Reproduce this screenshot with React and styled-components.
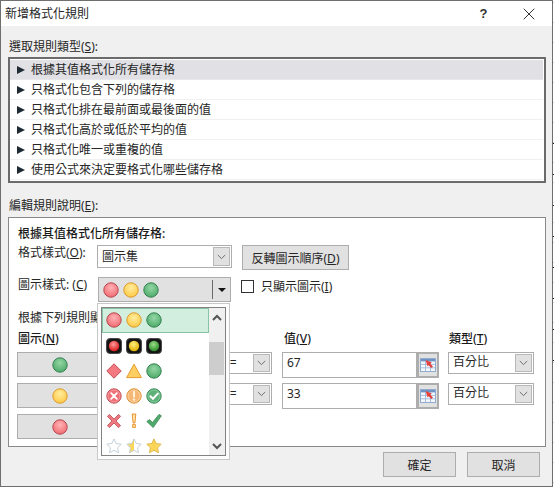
import React, { useId } from "react";
import styled, { createGlobalStyle } from "styled-components";

const Global = createGlobalStyle`
  html, body { margin: 0; padding: 0; }
  body {
    font-family: "Noto Sans", "Noto Sans CJK TC", sans-serif; font-size: 12px; color: #262626;
    background-color: #fff;
    background-image:
      repeating-linear-gradient(#111 0 1px, transparent 1px 31px),
      repeating-linear-gradient(#d0d0d0 0 1px, #fff 1px 20px);
    background-size: 100% 225px, 100% 100%;
    background-position: 0 143px, 0 2px;
    background-repeat: no-repeat;
    min-height: 487px;
  }
  * { box-sizing: border-box; }
`;

const Dialog = styled.div`
  width: 553px; height: 487px; display: flex; flex-direction: column;
  background: #f0f0f0; border: 1px solid #6f6f6f; overflow: hidden;
`;
const TitleBar = styled.div`
  height: 25px; flex: none; display: flex; align-items: center; background: #fff; padding: 0 1px 0 4px;
`;
const TitleText = styled.span`flex: 1; line-height: 25px;`;
const TitleBtn = styled.button`
  width: 45px; height: 25px; border: 0; background: none; padding: 0; display: flex; align-items: center; justify-content: center;
  font: 700 13px "Liberation Sans", sans-serif; color: #333;
`;
const Body = styled.div`flex: 1; padding: 10px 6px 0 7px; display: flex; flex-direction: column; min-height: 0;`;
const SectionLabel = styled.div`
  height: 20px; line-height: 22px; padding-left: 1px; margin-bottom: ${p => p.$gap}px;
`;
const RuleList = styled.div`
  width: 538px; height: 126px; border: 2px solid #6b6b6b; background: #fff; padding: 1px 1px 1px 0; margin-bottom: 12px;
`;
const RuleRow = styled.div`
  height: 20px; display: flex; align-items: center; padding: 1px 0 0 7px; gap: 6px; line-height: 18px;
  background: ${p => (p.$selected ? "#e0e0e5" : "#fff")};
  border-bottom: 1px solid ${p => (p.$selected ? "#e8e8ec" : "#f0f0f0")};
`;
const Tri = styled.span`
  width: 0; height: 0; border-left: 8px solid #1f2a33; border-top: 4px solid transparent; border-bottom: 4px solid transparent;
`;
const Panel = styled.div`
  position: relative; width: 538px; height: 230px; background: #fff; border: 1px solid #8a8a8a; padding: 5px 9px 0 9px;
  display: flex; flex-direction: column;
`;
const Heading = styled.div`height: 20px; line-height: 22px; font-weight: 500; color: #1a1a1a;`;
const Note = styled.div`height: 20px; line-height: 22px; margin-top: 5px;`;
const FormRow = styled.div`
  display: flex; align-items: flex-start; height: ${p => p.$h}px; margin-top: ${p => p.$mt}px;
`;
const FieldLabel = styled.div`
  width: ${p => p.$w}px; flex: none; line-height: 18px; margin-top: ${p => p.$mt}px;
`;
const SelectBox = styled.div`
  width: ${p => p.$w}px; height: ${p => p.$h || 23}px; flex: none; display: flex; align-items: center; justify-content: space-between;
  background: #fff; border: 1px solid #adadad; padding: 1px; padding-left: ${p => p.$pl || 4}px; margin-left: ${p => p.$ml || 0}px;
`;
const SelectText = styled.span`line-height: 18px; margin-bottom: ${p => p.$mb || 0}px;`;
const ArrowBox = styled.span`
  width: 17px; align-self: stretch; flex: none; background: #e1e1e1; border: 1px solid #b8b8b8; display: flex; align-items: center; justify-content: center;
`;
const PushButton = styled.button`
  width: ${p => p.$w}px; height: 25px; flex: none; background: #e1e1e1; border: 1px solid #adadad; padding: 0;
  font: inherit; color: inherit; margin-left: ${p => p.$ml || 0}px; text-align: center;
`;
const IconSelect = styled.div`
  width: 133px; height: 25px; flex: none; margin-left: 1px; background: #e1e1e1; border: 1px solid #adadad;
  display: flex; align-items: center; padding-left: 4px; position: relative;
`;
const IconTrio = styled.span`display: flex; gap: 4px; align-items: center;`;
const DropPart = styled.span`
  position: absolute; right: 0; top: 2px; bottom: 2px; width: 18px; border-left: 1px solid #6a6a6a; display: flex; align-items: center; justify-content: center;
`;
const DownTri = styled.span`
  width: 0; height: 0; border-top: 4px solid #111; border-left: 4px solid transparent; border-right: 4px solid transparent;
`;
const CheckBox = styled.span`
  width: 13px; height: 13px; flex: none; border: 1px solid #333; background: #fff; margin: 3px 7px 0 10px;
`;
const ColHead = styled.div`
  width: ${p => p.$w}px; flex: none; line-height: 18px; font-weight: 500; color: #1a1a1a;
`;
const RuleGrid = styled.div`
  display: flex; flex-direction: column; gap: 6px; margin-top: 4px; margin-left: -1px;
`;
const RuleLine = styled.div`display: flex; align-items: flex-start; height: 25px;`;
const IconButton = styled.button`
  width: 86px; height: 25px; flex: none; background: #e1e1e1; border: 1px solid #adadad; padding: 0;
  display: flex; align-items: center; justify-content: center;
`;
const ValueField = styled.div`
  width: 135px; height: 26px; flex: none; margin-left: 10px; background: #fff; border: 1px solid #adadad;
  display: flex; align-items: center; padding: 0 0 6px 4px;
`;
const PickerBtn = styled.button`
  width: 22px; height: 26px; flex: none; background: #e1e1e1; border: 2px solid #adadad; padding: 0;
  display: flex; align-items: center; justify-content: center;
`;
const Footer = styled.div`
  display: flex; justify-content: flex-end; gap: 11px; padding-right: 6px; margin-top: 5px;
`;
const Popup = styled.div`
  position: absolute; left: 88px; top: 85px; width: 133px; height: 157px; background: #fdfdfd; border: 1px solid #c8c8c8; padding: 3px;
`;
const PopupInner = styled.div`
  width: 125px; height: 149px; border: 1px solid #828282; background: #fff; display: flex; overflow: hidden;
`;
const PopupRows = styled.div`width: 107px; flex: none; overflow: hidden;`;
const PopupRow = styled.div`
  height: 25px; display: flex; align-items: center; padding: 0 0 ${p => (p.$selected ? 2 : 0)}px 4px;
  background: ${p => (p.$selected ? "#d2eedf" : "#fff")};
  outline: ${p => (p.$selected ? "1px solid #86c4a3" : "none")}; outline-offset: -1px;
`;
const ScrollTrack = styled.div`
  flex: 1; background: #f0f0f0; display: flex; flex-direction: column; justify-content: space-between; position: relative; padding: 6px 0 5px;
`;
const ScrollThumb = styled.div`
  position: absolute; left: 0; right: 1px; top: 34px; height: 33px; background: #cdcdcd;
`;
const Chevron = styled.svg`display: block; align-self: center;`;
const GlyphSvg = styled.svg`display: block;`;

const Mn = ({ c }) => <u>{c}</u>;

const SmallChevron = () => (
  <svg width="9" height="6" viewBox="0 0 9 6"><path d="M0.8 1l3.7 3.6L8.2 1" fill="none" stroke="#6f6f6f" strokeWidth="1" /></svg>
);

const palette = {
  red: ["#ffb3b6", "#f0656d", "#b5484f"],
  yellow: ["#ffec9e", "#fdc63e", "#dc9a2c"],
  green: ["#93d6a4", "#4aa766", "#35804f"],
};

const Glyph = ({ children }) => (
  <GlyphSvg width="16" height="16" viewBox="0 0 16 16">{children}</GlyphSvg>
);

const Ball = ({ color }) => {
  const id = useId();
  const [a, b, s] = palette[color];
  return (
    <Glyph>
      <defs>
        <radialGradient id={id} cx="50%" cy="35%" r="70%"><stop offset="0" stopColor={a} /><stop offset="1" stopColor={b} /></radialGradient>
      </defs>
      <circle cx="8" cy="8" r="7.2" fill={`url(#${id})`} stroke={s} strokeWidth="1" />
    </Glyph>
  );
};

const Lamp = ({ color }) => {
  const id = useId();
  const cols = { red: ["#ff9a9a", "#d81818"], yellow: ["#fff080", "#e0ae00"], green: ["#9ade88", "#2a8a28"] }[color];
  return (
    <Glyph>
      <defs>
        <radialGradient id={id} cx="45%" cy="35%" r="65%"><stop offset="0" stopColor={cols[0]} /><stop offset="1" stopColor={cols[1]} /></radialGradient>
      </defs>
      <rect x="0.5" y="0.5" width="15" height="15" rx="3.5" fill="#141414" stroke="#4a4a4a" />
      <circle cx="8" cy="8" r="5.2" fill={`url(#${id})`} />
    </Glyph>
  );
};

const Diamond = () => (
  <Glyph><path d="M8 .8L15.2 8 8 15.2.8 8z" fill="#f4787f" stroke="#bf4f56" /></Glyph>
);
const Triangle = () => (
  <Glyph><path d="M8 1.2L15.4 14.6H.6z" fill="#fdcf62" stroke="#e59a2c" /></Glyph>
);
const XBall = () => (
  <Glyph>
    <circle cx="8" cy="8" r="7.2" fill="#ee6f76" stroke="#bf555a" />
    <circle cx="8" cy="8" r="6" fill="none" stroke="#f7a2a6" strokeWidth=".8" />
    <path d="M5.2 5.2l5.6 5.6M10.8 5.2l-5.6 5.6" stroke="#fff" strokeWidth="1.9" strokeLinecap="round" />
  </Glyph>
);
const BangBall = () => (
  <Glyph>
    <circle cx="8" cy="8" r="7.2" fill="#f7b772" stroke="#dd8f38" />
    <circle cx="8" cy="8" r="6" fill="none" stroke="#fbd6a8" strokeWidth=".8" />
    <path d="M8 3.8v5" stroke="#fff2dc" strokeWidth="2" strokeLinecap="round" />
    <circle cx="8" cy="11.6" r="1.2" fill="#fff2dc" />
  </Glyph>
);
const CheckBall = () => (
  <Glyph>
    <circle cx="8" cy="8" r="7.2" fill="#5cb078" stroke="#3b8a57" />
    <circle cx="8" cy="8" r="6" fill="none" stroke="#8fd0a4" strokeWidth=".8" />
    <path d="M4.4 8.2l2.6 2.6 4.8-5.2" fill="none" stroke="#fff" strokeWidth="2" strokeLinecap="round" />
  </Glyph>
);
const Cross = () => (
  <Glyph><path d="M1.4 3.4L3.4 1.4 8 6l4.6-4.6 2 2L10 8l4.6 4.6-2 2L8 10l-4.6 4.6-2-2L6 8z" fill="#ee7a80" stroke="#b8474e" strokeWidth=".8" /></Glyph>
);
const Bang = () => (
  <Glyph>
    <path d="M6.2 1h3.6L8.9 10H7.1z" fill="#ffe6ae" stroke="#e8871c" strokeWidth=".9" />
    <rect x="6.7" y="11.6" width="2.6" height="2.8" fill="#ffdf9c" stroke="#e8871c" strokeWidth=".8" />
  </Glyph>
);
const Tick = () => (
  <Glyph><path d="M.8 8.6l2.8-2 2.8 3L13 1.4l2.4 1.4-8.2 11.8z" fill="#4fab6b" stroke="#2f7a49" strokeWidth=".7" /></Glyph>
);
const starPath = "M8 .9l2.2 4.6 5 .7-3.6 3.5.9 5L8 12.3l-4.5 2.4.9-5L.8 6.2l5-.7z";
const Star = ({ fill }) => {
  const id = useId();
  const gold = fill !== "none";
  const right = fill === "full";
  return (
    <Glyph>
      <defs>
        <linearGradient id={id} x1="0" x2="1" y1="0" y2="0">
          <stop offset="0" stopColor={gold ? "#fde27a" : "#fff"} />
          <stop offset=".5" stopColor={gold ? "#fbd24f" : "#fff"} />
          <stop offset=".5" stopColor={right ? "#fbd24f" : "#fff"} />
          <stop offset="1" stopColor={right ? "#fde27a" : "#fff"} />
        </linearGradient>
      </defs>
      <path d={starPath} fill={`url(#${id})`} stroke={right ? "#dcb140" : "#bccbd6"} strokeWidth=".9" />
    </Glyph>
  );
};

const Picker = () => (
  <svg width="16" height="16" viewBox="0 0 16 16">
    <rect x="0.5" y="1.5" width="15" height="13" fill="#f4f8fd" stroke="#8fabd0" />
    <rect x="1" y="2" width="14" height="2.4" fill="#6f94c4" />
    <path d="M1 7.4h14M1 10.8h14M5.5 4v10M10.5 4v10" stroke="#9db8da" strokeWidth=".9" />
    <path d="M5.6 3l6.2 2.6-1.5 1.2 2.7 2.8-1.7 1.5-2.7-2.8L7.6 9.6z" fill="#e6403c" />
  </svg>
);

const rules = [
  "根據其值格式化所有儲存格",
  "只格式化包含下列的儲存格",
  "只格式化排在最前面或最後面的值",
  "只格式化高於或低於平均的值",
  "只格式化唯一或重複的值",
  "使用公式來決定要格式化哪些儲存格",
];

const gapped = (a, b, c) => <IconTrio>{a}{b}{c}</IconTrio>;

const iconSets = [
  gapped(<Ball color="red" />, <Ball color="yellow" />, <Ball color="green" />),
  gapped(<Lamp color="red" />, <Lamp color="yellow" />, <Lamp color="green" />),
  gapped(<Diamond />, <Triangle />, <Ball color="green" />),
  gapped(<XBall />, <BangBall />, <CheckBall />),
  gapped(<Cross />, <Bang />, <Tick />),
  gapped(<Star fill="none" />, <Star fill="half" />, <Star fill="full" />),
];

const thresholds = [
  { color: "green", value: "67" },
  { color: "yellow", value: "33" },
];

export default function App() {
  return (
    <>
      <Global />
      <Dialog>
        <TitleBar>
          <TitleText>新增格式化規則</TitleText>
          <TitleBtn>?</TitleBtn>
          <TitleBtn>
            <svg width="12" height="12" viewBox="0 0 12 12"><path d="M.7.7l10.6 10.6M11.3.7L.7 11.3" stroke="#333" strokeWidth="1" fill="none" /></svg>
          </TitleBtn>
        </TitleBar>
        <Body>
          <SectionLabel $gap={1}>選取規則類型(<Mn c="S" />):</SectionLabel>
          <RuleList>
            {rules.map((r, i) => (
              <RuleRow key={r} $selected={i === 0}><Tri />{r}</RuleRow>
            ))}
          </RuleList>
          <SectionLabel $gap={2}>編輯規則說明(<Mn c="E" />):</SectionLabel>
          <Panel>
            <Heading>根據其值格式化所有儲存格:</Heading>
            <FormRow $h={25} $mt={2}>
              <FieldLabel $w={79} $mt={-1}>格式樣式(<Mn c="O" />):</FieldLabel>
              <SelectBox $w={135}><SelectText>圖示集</SelectText><ArrowBox><SmallChevron /></ArrowBox></SelectBox>
              <PushButton $w={107} $ml={10}>反轉圖示順序(<Mn c="D" />)</PushButton>
            </FormRow>
            <FormRow $h={25} $mt={7}>
              <FieldLabel $w={79} $mt={-1}>圖示樣式: (<Mn c="C" />)</FieldLabel>
              <IconSelect>
                {iconSets[0]}
                <DropPart><DownTri /></DropPart>
              </IconSelect>
              <CheckBox />
              <FieldLabel $w={80} $mt={1}>只顯示圖示(<Mn c="I" />)</FieldLabel>
            </FormRow>
            <Note>根據下列規則顯示各個圖示:</Note>
            <FormRow $h={18} $mt={3}>
              <ColHead $w={266}>圖示(<Mn c="N" />)</ColHead>
              <ColHead $w={165}>值(<Mn c="V" />)</ColHead>
              <ColHead $w={60}>類型(<Mn c="T" />)</ColHead>
            </FormRow>
            <RuleGrid>
              {thresholds.map(t => (
                <RuleLine key={t.value}>
                  <IconButton><Ball color={t.color} /></IconButton>
                  <SelectBox $w={52} $h={22} $ml={117} $pl={2}><SelectText>&gt;=</SelectText><ArrowBox><SmallChevron /></ArrowBox></SelectBox>
                  <ValueField>{t.value}</ValueField>
                  <PickerBtn><Picker /></PickerBtn>
                  <SelectBox $w={86} $h={22} $ml={9}><SelectText $mb={2}>百分比</SelectText><ArrowBox><SmallChevron /></ArrowBox></SelectBox>
                </RuleLine>
              ))}
              <RuleLine>
                <IconButton><Ball color="red" /></IconButton>
              </RuleLine>
            </RuleGrid>
            <Popup>
              <PopupInner>
                <PopupRows>
                  {iconSets.map((s, i) => (
                    <PopupRow key={i} $selected={i === 0}>{s}</PopupRow>
                  ))}
                </PopupRows>
                <ScrollTrack>
                  <Chevron width="10" height="7" viewBox="0 0 10 7"><path d="M1 6l4-4 4 4" fill="none" stroke="#555" strokeWidth="2" /></Chevron>
                  <ScrollThumb />
                  <Chevron width="10" height="7" viewBox="0 0 10 7"><path d="M1 1l4 4 4-4" fill="none" stroke="#555" strokeWidth="2" /></Chevron>
                </ScrollTrack>
              </PopupInner>
            </Popup>
          </Panel>
          <Footer>
            <PushButton $w={73}>確定</PushButton>
            <PushButton $w={73}>取消</PushButton>
          </Footer>
        </Body>
      </Dialog>
    </>
  );
}
